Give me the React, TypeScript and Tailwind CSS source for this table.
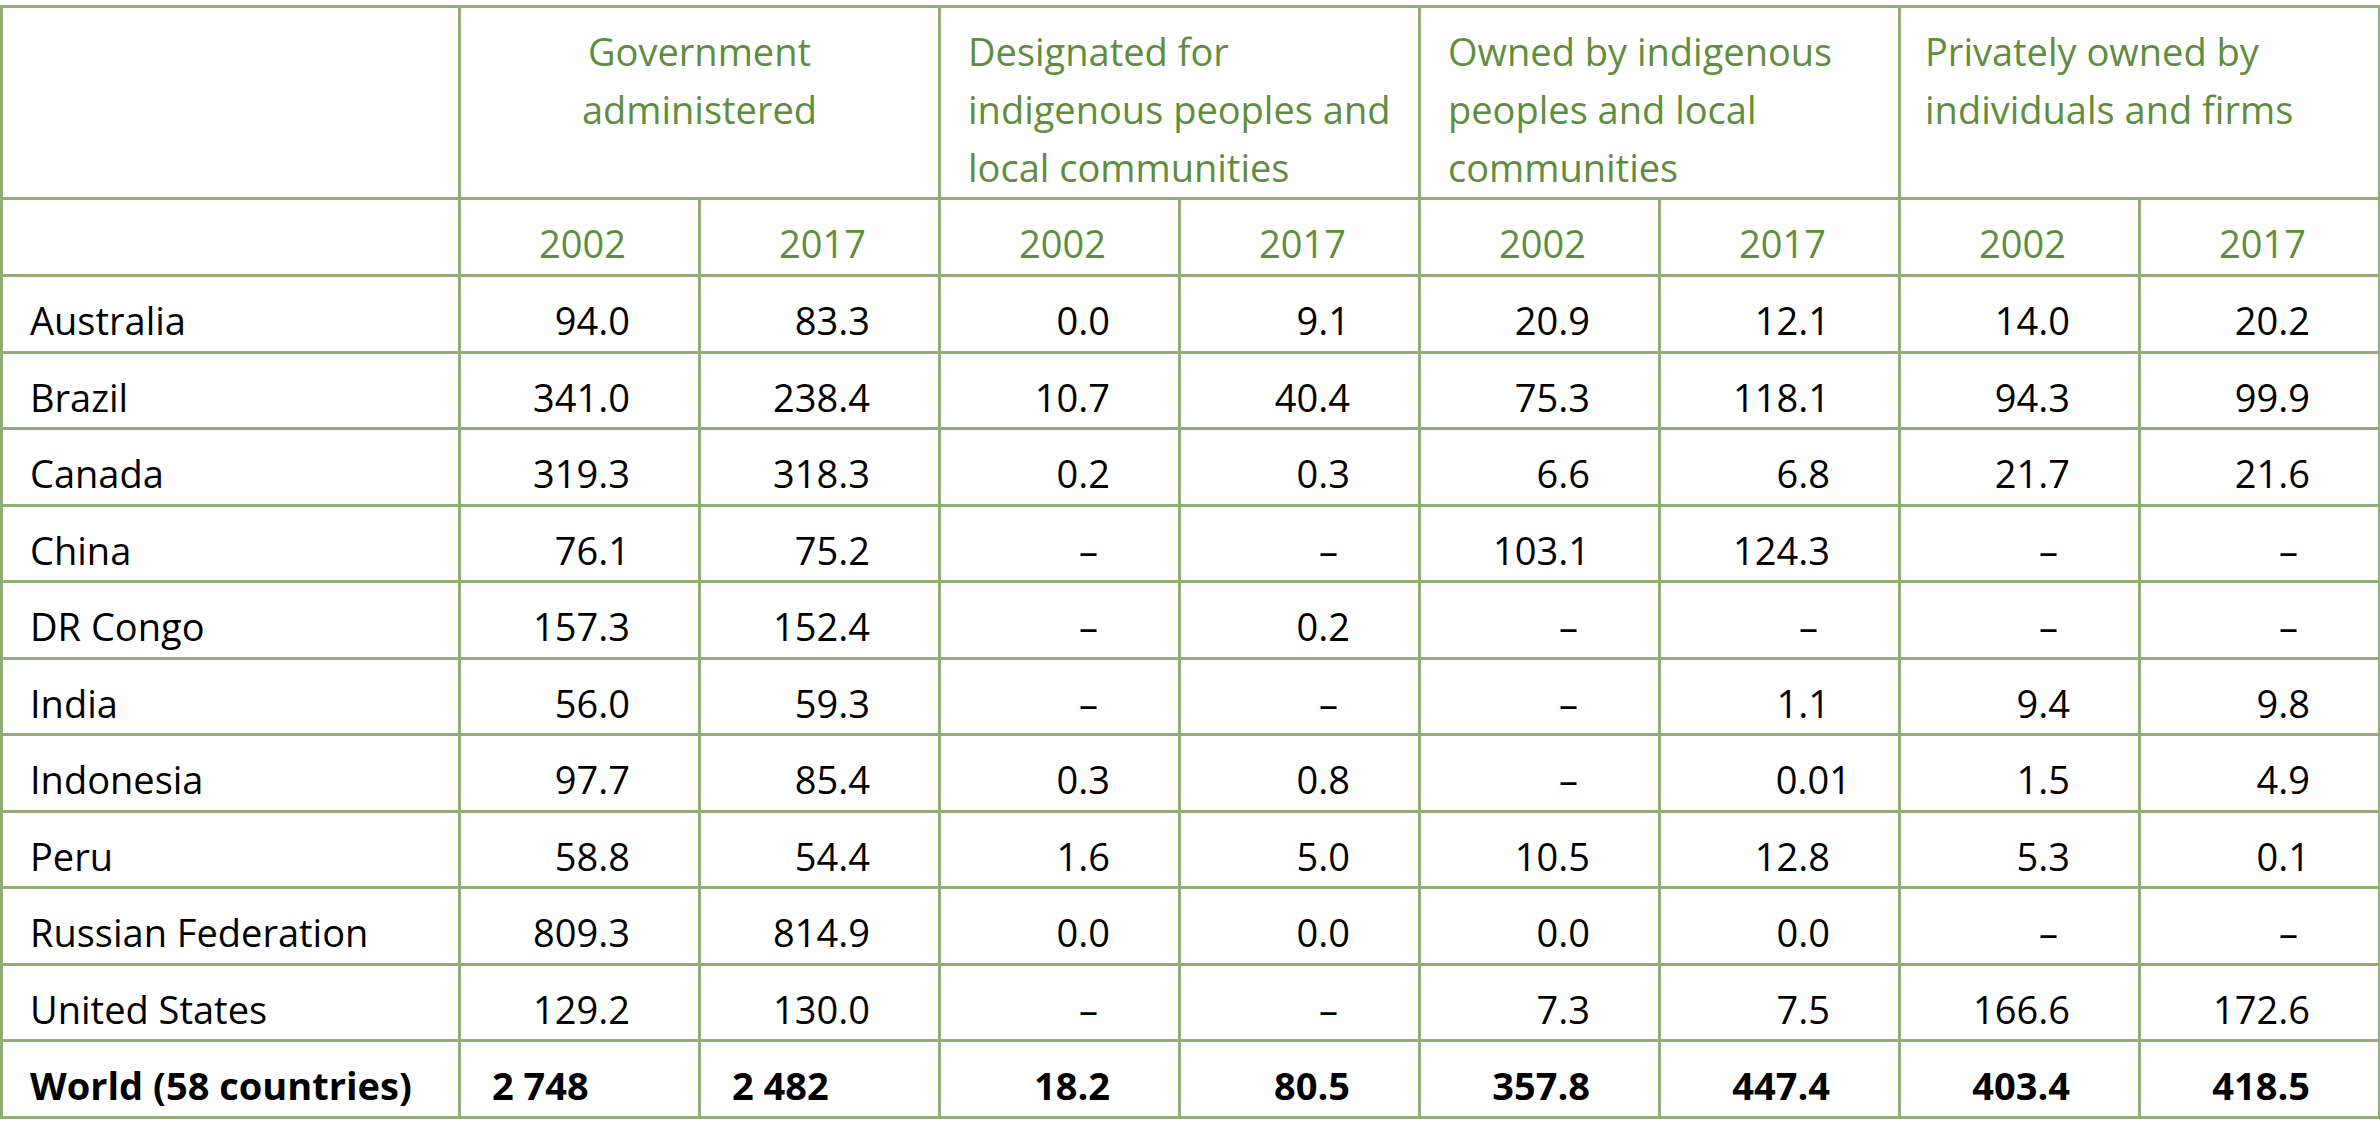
import React from "react";

type Row = { name: string; values: string[]; bold?: boolean };

const rows: Row[] = [
  { name: "Australia", values: ["94.0", "83.3", "0.0", "9.1", "20.9", "12.1", "14.0", "20.2"] },
  { name: "Brazil", values: ["341.0", "238.4", "10.7", "40.4", "75.3", "118.1", "94.3", "99.9"] },
  { name: "Canada", values: ["319.3", "318.3", "0.2", "0.3", "6.6", "6.8", "21.7", "21.6"] },
  { name: "China", values: ["76.1", "75.2", "–", "–", "103.1", "124.3", "–", "–"] },
  { name: "DR Congo", values: ["157.3", "152.4", "–", "0.2", "–", "–", "–", "–"] },
  { name: "India", values: ["56.0", "59.3", "–", "–", "–", "1.1", "9.4", "9.8"] },
  { name: "Indonesia", values: ["97.7", "85.4", "0.3", "0.8", "–", "0.01", "1.5", "4.9"] },
  { name: "Peru", values: ["58.8", "54.4", "1.6", "5.0", "10.5", "12.8", "5.3", "0.1"] },
  { name: "Russian Federation", values: ["809.3", "814.9", "0.0", "0.0", "0.0", "0.0", "–", "–"] },
  { name: "United States", values: ["129.2", "130.0", "–", "–", "7.3", "7.5", "166.6", "172.6"] },
  {
    name: "World (58 countries)",
    values: ["2 748", "2 482", "18.2", "80.5", "357.8", "447.4", "403.4", "418.5"],
    bold: true,
  },
];

const cell = "border-[3px] border-[#93ad78] align-top pt-[14px] leading-[58px]";

// decimal alignment is faked with right padding per value kind
const valueClass = (v: string) => {
  if (v === "–") return "text-right pr-[80px]";
  if (v === "0.01") return "text-right pr-[47px]";
  if (!v.includes(".")) return "text-left pl-[31px]";
  return "text-right pr-[68px]";
};

const App: React.FC = () => {
  return (
    <div className="min-h-screen bg-white pt-[5px] font-['Open_Sans',sans-serif] text-[38px] text-black">
      <table className="table-fixed border-collapse w-[2381px]">
        <colgroup>
          <col className="w-[458px]" />
          {[0, 1, 2, 3, 4, 5, 6, 7].map((i) => (
            <col key={i} className="w-[240px]" />
          ))}
        </colgroup>
        <thead className="text-[#5d8e3c]">
          <tr className="h-[192px]">
            <th className={cell}></th>
            <th colSpan={2} className={`${cell} text-center font-normal`}>
              Government
              <br />
              administered
            </th>
            <th colSpan={2} className={`${cell} text-left font-normal pl-[27px]`}>
              Designated for
              <br />
              indigenous peoples and
              <br />
              local communities
            </th>
            <th colSpan={2} className={`${cell} text-left font-normal pl-[27px]`}>
              Owned by indigenous
              <br />
              peoples and local
              <br />
              communities
            </th>
            <th colSpan={2} className={`${cell} text-left font-normal pl-[24px]`}>
              Privately owned by
              <br />
              individuals and firms
            </th>
          </tr>
          <tr className="h-[77px]">
            <th className={cell}></th>
            {["2002", "2017", "2002", "2017", "2002", "2017", "2002", "2017"].map((y, i) => (
              <th key={i} className={`${cell} text-center font-normal pl-[6px]`}>
                {y}
              </th>
            ))}
          </tr>
        </thead>
        <tbody>
          {rows.map((r) => (
            <tr key={r.name} className={`h-[76.5px] ${r.bold ? "font-bold" : ""}`}>
              <td className={`${cell} pl-[27px] whitespace-nowrap`}>{r.name}</td>
              {r.values.map((v, i) => (
                <td key={i} className={`${cell} ${valueClass(v)} whitespace-nowrap`}>
                  {v}
                </td>
              ))}
            </tr>
          ))}
        </tbody>
      </table>
    </div>
  );
};

export default App;
